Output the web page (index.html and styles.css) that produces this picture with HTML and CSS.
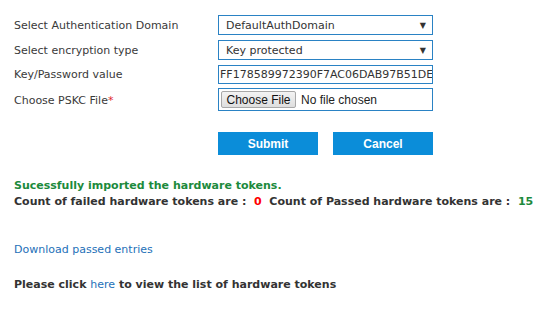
FILE: index.html
```html
<!DOCTYPE html>
<html>
<head>
<meta charset="utf-8">
<link rel="stylesheet" href="styles.css">
</head>
<body>
<div class="page">
  <div class="form">
    <label class="lbl">Select Authentication Domain</label>
    <div class="field select"><span>DefaultAuthDomain</span><span class="arrow">&#9660;</span></div>
    <label class="lbl">Select encryption type</label>
    <div class="field select"><span>Key protected</span><span class="arrow">&#9660;</span></div>
    <label class="lbl">Key/Password value</label>
    <div class="field text"><span class="val">FF178589972390F7AC06DAB97B51DE</span></div>
    <label class="lbl">Choose PSKC File<span class="req">*</span></label>
    <div class="field file"><span class="filebtn">Choose File</span><span class="nofile">No file chosen</span></div>
  </div>
  <div class="actions">
    <button class="btn">Submit</button>
    <button class="btn">Cancel</button>
  </div>
  <p class="success">Sucessfully imported the hardware tokens.</p>
  <p class="counts">Count of failed hardware tokens are :&nbsp; <span class="fail">0</span>&nbsp; Count of Passed hardware tokens are :&nbsp; <span class="pass">15</span></p>
  <a class="download" href="#">Download passed entries</a>
  <p class="note">Please click <a href="#" class="here">here</a> to view the list of hardware tokens</p>
</div>
</body>
</html>
```
FILE: styles.css
```css
html, body { margin: 0; padding: 0; background: #fff; }
body { font-family: "DejaVu Sans", Verdana, sans-serif; font-size: 11px; color: #333; }
.page { padding: 15px 0 0 14px; }
.form {
  display: grid;
  grid-template-columns: 204px 215px;
  grid-auto-rows: auto;
  row-gap: 5px;
  align-items: center;
}
.lbl { color: #3a3a3a; font-size: 11px; }
.req { color: #e0262b; }
.field {
  box-sizing: border-box;
  border: 1px solid #2a82c4;
  height: 20px;
  display: flex;
  align-items: center;
  overflow: hidden;
  white-space: nowrap;
  color: #333;
}
.select { padding: 0 6px 0 7px; justify-content: space-between; }
.arrow { font-size: 8px; color: #333; }
.text { padding: 0 0 0 1px; height: 19px; }
.val { overflow: hidden; }
.file { height: 23px; padding: 0 0 0 2px; margin-top: -1px; }
.filebtn {
  box-sizing: border-box;
  height: 17px;
  width: 75px;
  border: 1px solid #a8a8a8;
  border-radius: 2px;
  background: linear-gradient(#f3f3f3, #dedede);
  color: #111;
  display: flex; align-items: center; justify-content: center;
  font-family: "Liberation Sans", Arial, sans-serif; font-size: 12px;
}
.nofile { margin-left: 5px; font-family: "Liberation Sans", Arial, sans-serif; font-size: 12px; color: #222; }
.actions { display: flex; gap: 15px; padding-left: 204px; margin-top: 21px; }
.btn {
  width: 100px; height: 23px; border: 0; background: #0b8dd9; color: #fff;
  font-family: "Liberation Sans", Arial, sans-serif; font-weight: bold; font-size: 12px; padding: 0;
}
p { margin: 0; }
.success { margin-top: 24px; color: #1c8a3c; font-weight: bold; }
.counts { margin-top: 3px; font-weight: bold; color: #333; }
.fail { color: #f00; }
.pass { color: #1c8a3c; }
.download { display: block; margin-top: 35px; color: #1e70b8; text-decoration: none; }
.note { margin-top: 22px; font-weight: bold; color: #333; }
.here { color: #1e70b8; text-decoration: none; font-weight: normal; }
```
